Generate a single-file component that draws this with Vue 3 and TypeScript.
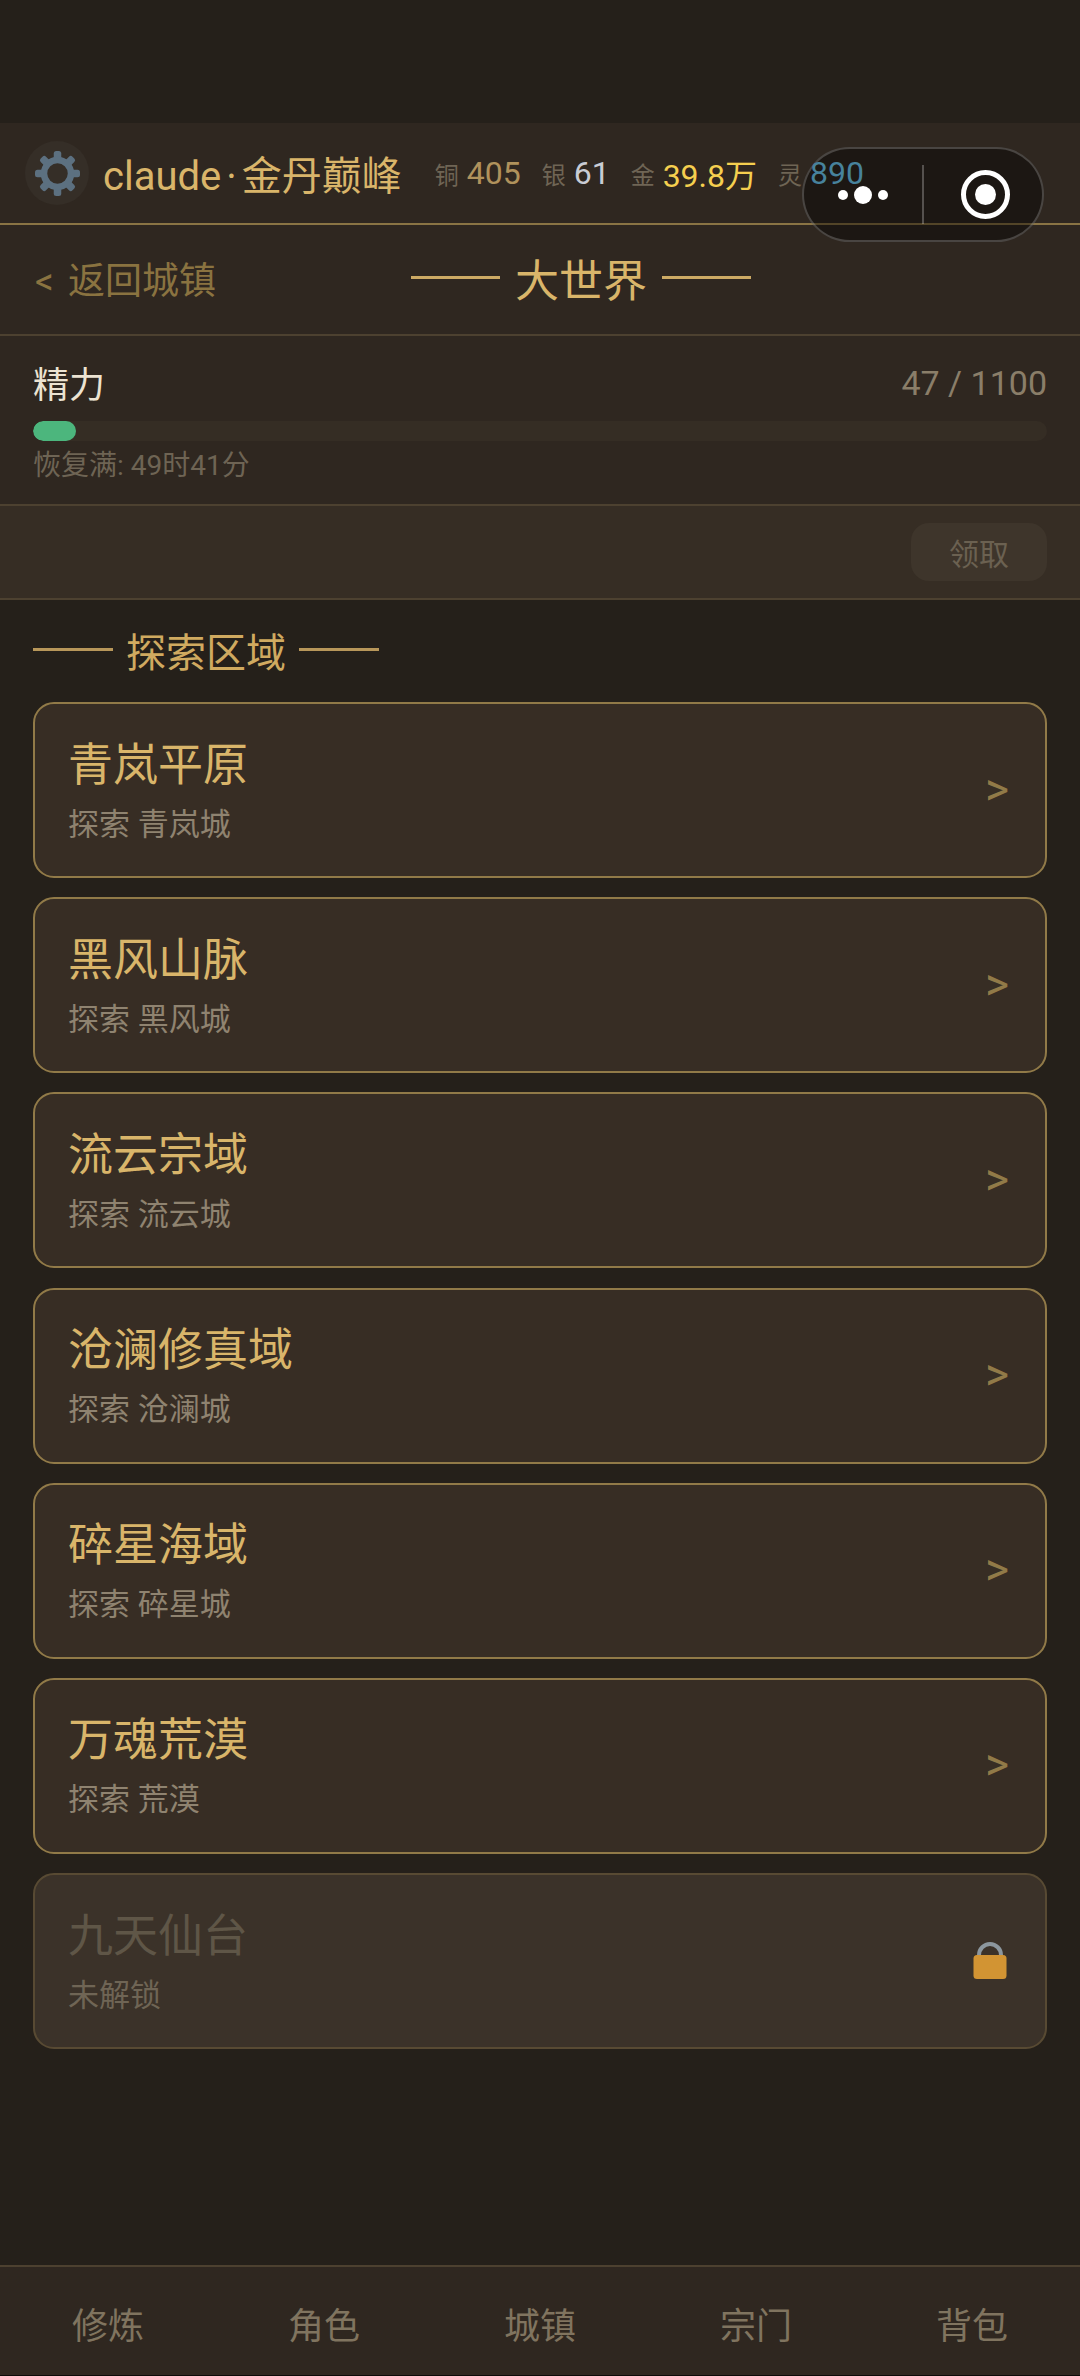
<template>
  <div class="page">
    <div class="status-space"></div>

    <header class="top-bar">
      <div class="avatar">
        <svg class="gear" viewBox="0 0 45 45">
          <g fill="#5c7080">
            <rect
              v-for="angle in gearTeeth"
              :key="angle"
              x="18.750"
              y="0"
              width="7.500"
              height="10"
              rx="2.500"
              :transform="`rotate(${angle} 22.500 22.500)`"
            />
          </g>
          <circle cx="22.500" cy="22.500" r="13.500" fill="none" stroke="#5c7080" stroke-width="6.500" />
        </svg>
      </div>
      <div class="player-name">claude<span class="dot">·</span>金丹巅峰</div>
      <div class="currencies">
        <div v-for="item in currencies" :key="item.label" class="currency">
          <span class="currency-label">{{ item.label }}</span>
          <span class="currency-value" :class="item.tone">{{ item.value }}</span>
        </div>
      </div>
    </header>

    <nav class="nav-bar">
      <span class="back">&lt; 返回城镇</span>
      <h1 class="page-title">大世界</h1>
    </nav>

    <section class="energy">
      <div class="energy-head">
        <span class="energy-label">精力</span>
        <span class="energy-value">{{ energy }} / {{ energyMax }}</span>
      </div>
      <div class="energy-track">
        <div class="energy-fill" :style="{ width: energyWidth }"></div>
      </div>
      <div class="energy-hint">恢复满: 49时41分</div>
    </section>

    <div class="reward-bar">
      <button class="claim" type="button" disabled>领取</button>
    </div>

    <main class="content">
      <h2 class="section-title">探索区域</h2>
      <div class="region-list">
        <div
          v-for="region in regions"
          :key="region.name"
          class="region-card"
          :class="{ locked: region.locked }"
        >
          <div class="region-text">
            <div class="region-name">{{ region.name }}</div>
            <div class="region-sub">{{ region.sub }}</div>
          </div>
          <svg v-if="region.locked" class="lock" viewBox="0 0 34 38">
            <path d="M6 18V13a11 11 0 0 1 22 0v5" fill="none" stroke="#8c979e" stroke-width="4" />
            <rect x="0.500" y="13" width="33" height="24" rx="3.500" fill="#d29433" />
          </svg>
          <span v-else class="arrow">&gt;</span>
        </div>
      </div>
    </main>

    <footer class="tab-bar">
      <span v-for="tab in tabs" :key="tab" class="tab">{{ tab }}</span>
    </footer>

    <div class="capsule">
      <div class="capsule-more">
        <i class="small"></i>
        <i class="big"></i>
        <i class="small"></i>
      </div>
      <span class="capsule-line"></span>
      <div class="capsule-close"><i></i></div>
    </div>
  </div>
</template>

<script setup lang="ts">
import { computed } from 'vue'

interface Currency {
  label: string
  value: string
  tone: string
}

interface Region {
  name: string
  sub: string
  locked?: boolean
}

const gearTeeth: number[] = [0, 45, 90, 135, 180, 225, 270, 315]

const currencies: Currency[] = [
  { label: '铜', value: '405', tone: 'copper' },
  { label: '银', value: '61', tone: 'silver' },
  { label: '金', value: '39.8万', tone: 'gold' },
  { label: '灵', value: '890', tone: 'spirit' }
]

const energy = 47
const energyMax = 1100
const energyWidth = computed((): string => `${Math.max((energy / energyMax) * 100, 3.7).toFixed(2)}%`)

const regions: Region[] = [
  { name: '青岚平原', sub: '探索 青岚城' },
  { name: '黑风山脉', sub: '探索 黑风城' },
  { name: '流云宗域', sub: '探索 流云城' },
  { name: '沧澜修真域', sub: '探索 沧澜城' },
  { name: '碎星海域', sub: '探索 碎星城' },
  { name: '万魂荒漠', sub: '探索 荒漠' },
  { name: '九天仙台', sub: '未解锁', locked: true }
]

const tabs: string[] = ['修炼', '角色', '城镇', '宗门', '背包']
</script>

<style>
html,
body {
  margin: 0;
  background: #25201a;
}
</style>

<style scoped>
.page {
  position: relative;
  display: flex;
  flex-direction: column;
  width: 1080px;
  height: 2376px;
  overflow: hidden;
  background: #25201a;
  font-family: Roboto, 'Noto Sans CJK SC', sans-serif;
}

.status-space {
  height: 123px;
  flex-shrink: 0;
}

.top-bar {
  display: flex;
  align-items: center;
  height: 100px;
  padding-left: 25px;
  background: #2f2720;
  border-bottom: 2px solid #8a7444;
  flex-shrink: 0;
  white-space: nowrap;
}

.avatar {
  display: flex;
  align-items: center;
  justify-content: center;
  width: 64px;
  height: 64px;
  border-radius: 50%;
  background: #352e27;
  flex-shrink: 0;
}

.gear {
  width: 45px;
  height: 45px;
}

.player-name {
  margin-left: 14px;
  font-size: 40px;
  color: #d9b56a;
}

.dot {
  margin: 0 5px;
}

.currencies {
  display: flex;
  align-items: center;
  gap: 21px;
  margin-left: 33px;
}

.currency {
  display: flex;
  align-items: center;
  gap: 8px;
}

.currency-label {
  font-size: 24px;
  color: #6f6555;
}

.currency-value {
  font-size: 32px;
}

.copper {
  color: #b0925c;
}

.silver {
  color: #c9ccd4;
}

.gold {
  color: #f5cf4f;
}

/* 캡슐 위로 올라오는 값 */
.spirit {
  position: relative;
  z-index: 2;
  color: #47829c;
}

.nav-bar {
  display: flex;
  align-items: center;
  height: 105px;
  padding-left: 35px;
  padding-bottom: 4px;
  background: #2f2720;
  border-bottom: 2px solid #4d4130;
  flex-shrink: 0;
}

.back {
  font-size: 37px;
  word-spacing: 5px;
  color: #8a7340;
}

.page-title {
  display: flex;
  align-items: center;
  gap: 15px;
  margin: 0 0 0 195px;
  font-family: 'Noto Sans CJK SC', sans-serif;
  font-size: 44px;
  font-weight: 400;
  color: #d9b56a;
  white-space: nowrap;
}

.page-title::before,
.page-title::after {
  content: '';
  width: 89px;
  height: 3px;
  background: #cdaa64;
}

.energy {
  height: 170px;
  padding: 21px 33px 0;
  box-sizing: border-box;
  background: #2f2720;
  border-bottom: 2px solid #4d4130;
  flex-shrink: 0;
}

.energy-head {
  display: flex;
  align-items: center;
  justify-content: space-between;
  height: 50px;
}

.energy-label {
  font-size: 36px;
  color: #ece3d2;
}

.energy-value {
  margin-top: 2px;
  font-size: 34px;
  color: #8a7e69;
}

.energy-track {
  height: 20px;
  margin-top: 14px;
  border-radius: 10px;
  background: #352d24;
  overflow: hidden;
}

.energy-fill {
  height: 100%;
  border-radius: 10px;
  background: #4cb67d;
}

.energy-hint {
  margin-top: 5px;
  font-size: 28px;
  line-height: 40px;
  color: #6e6454;
}

.reward-bar {
  display: flex;
  align-items: center;
  justify-content: flex-end;
  height: 92px;
  padding-right: 33px;
  background: #362d24;
  border-bottom: 2px solid #4d4130;
  flex-shrink: 0;
}

.claim {
  width: 136px;
  height: 58px;
  padding: 0;
  border: none;
  border-radius: 18px;
  background: #3e352b;
  font-family: inherit;
  font-size: 30px;
  color: #6b6151;
}

.content {
  flex: 1;
  padding: 0 33px;
}

.section-title {
  display: flex;
  align-items: center;
  gap: 13px;
  margin: 0;
  height: 102px;
  padding-bottom: 3px;
  box-sizing: border-box;
  font-family: 'Noto Sans CJK SC', sans-serif;
  font-size: 40px;
  font-weight: 400;
  color: #d0aa60;
  white-space: nowrap;
}

.section-title::before,
.section-title::after {
  content: '';
  width: 80px;
  height: 3px;
  background: #b8975a;
}

.region-list {
  display: flex;
  flex-direction: column;
  gap: 19.200px;
}

.region-card {
  display: flex;
  align-items: center;
  justify-content: space-between;
  height: 176px;
  padding: 0 36px 0 33px;
  box-sizing: border-box;
  border: 2px solid #917a48;
  border-radius: 21px;
  background: #372d24;
}

.region-name {
  font-size: 45px;
  line-height: 62px;
  color: #d9b56a;
}

.region-sub {
  margin-top: 7px;
  font-size: 31px;
  line-height: 42px;
  color: #8f8370;
}

.arrow {
  margin-top: -3px;
  font-size: 46px;
  color: #917a48;
}

.region-card.locked {
  border-color: #584a33;
  background: #3b3229;
}

.locked .region-name {
  color: #5f5647;
}

.locked .region-sub {
  color: #6f6555;
}

.lock {
  width: 34px;
  height: 38px;
  margin-right: 2px;
}

.tab-bar {
  display: grid;
  grid-template-columns: repeat(5, 1fr);
  align-items: center;
  height: 104px;
  padding-top: 4px;
  background: #2f2720;
  border-top: 2px solid #4d4130;
  border-bottom: 1px solid #0d0b09;
  flex-shrink: 0;
}

.tab {
  text-align: center;
  font-size: 36px;
  color: #80745f;
}

.capsule {
  position: absolute;
  z-index: 1;
  top: 147px;
  left: 802px;
  display: flex;
  align-items: center;
  width: 242px;
  height: 95px;
  box-sizing: border-box;
  border: 2px solid rgba(255, 255, 255, 0.2);
  border-radius: 48px;
  background: rgba(0, 0, 0, 0.4);
}

.capsule-more {
  display: flex;
  align-items: center;
  justify-content: center;
  gap: 6px;
  width: 118px;
}

.capsule-more i {
  border-radius: 50%;
  background: #fff;
}

.capsule-more .small {
  width: 10px;
  height: 10px;
}

.capsule-more .big {
  width: 18px;
  height: 18px;
}

.capsule-line {
  width: 2px;
  height: 59px;
  background: rgba(255, 255, 255, 0.25);
}

.capsule-close {
  display: flex;
  align-items: center;
  justify-content: center;
  width: 49px;
  height: 49px;
  margin-left: 37px;
  border: 5px solid #fff;
  border-radius: 50%;
  box-sizing: border-box;
}

.capsule-close i {
  width: 21px;
  height: 21px;
  border-radius: 50%;
  background: #fff;
}
</style>
